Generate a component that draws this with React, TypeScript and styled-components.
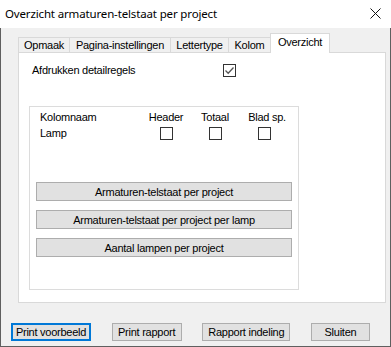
import React from 'react';
import styled, { createGlobalStyle } from 'styled-components';

const GlobalStyle = createGlobalStyle`
  html, body {
    margin: 0;
    padding: 0;
    background: #ffffff;
  }
  body {
    font-family: 'Liberation Sans', Arial, sans-serif;
    font-size: 11px;
    color: #000;
  }
`;

type TabDef = { label: string; width: number };

const tabs: TabDef[] = [
  { label: 'Opmaak', width: 52 },
  { label: 'Pagina-instellingen', width: 102 },
  { label: 'Lettertype', width: 59 },
  { label: 'Kolom', width: 43 },
  { label: 'Overzicht', width: 60 },
];

const reports = [
  'Armaturen-telstaat per project',
  'Armaturen-telstaat per project per lamp',
  'Aantal lampen per project',
];

const footerButtons = [
  { label: 'Print voorbeeld', width: 80, focused: true },
  { label: 'Print rapport', width: 70, focused: false },
  { label: 'Rapport indeling', width: 88, focused: false },
  { label: 'Sluiten', width: 59, focused: false },
];

const CheckBox: React.FC<{ checked?: boolean }> = ({ checked }) => (
  <Box>
    {checked && (
      <svg width="11" height="11" viewBox="0 0 11 11">
        <path d="M1.5 5.5 L4.2 8.2 L9.5 2.5" fill="none" stroke="#555" strokeWidth="1.3" />
      </svg>
    )}
  </Box>
);

const App: React.FC = () => {
  const activeTab = 'Overzicht';

  return (
    <>
      <GlobalStyle />
      <Window>
        <TitleBar>
          <Title>Overzicht armaturen-telstaat per project</Title>
          <CloseIcon width="11" height="11" viewBox="0 0 11 11">
            <path d="M0.5 0.5 L10.5 10.5 M10.5 0.5 L0.5 10.5" stroke="#111" strokeWidth="1" />
          </CloseIcon>
        </TitleBar>
        <Body>
          <TabStrip>
            {tabs.map((t) => (
              <Tab key={t.label} $width={t.width} $active={t.label === activeTab}>
                {t.label}
              </Tab>
            ))}
          </TabStrip>
          <Panel>
            <DetailRow>
              <span>Afdrukken detailregels</span>
              <CheckBox checked />
            </DetailRow>
            <Group>
              <ColumnGrid>
                <span>Kolomnaam</span>
                <ColHead>Header</ColHead>
                <ColHead>Totaal</ColHead>
                <ColHead>Blad sp.</ColHead>
                <span>Lamp</span>
                <ColCell>
                  <CheckBox />
                </ColCell>
                <ColCell>
                  <CheckBox />
                </ColCell>
                <ColCell $shift={-3}>
                  <CheckBox />
                </ColCell>
              </ColumnGrid>
              <ReportList>
                {reports.map((r) => (
                  <ReportButton key={r}>{r}</ReportButton>
                ))}
              </ReportList>
            </Group>
          </Panel>
          <Footer>
            {footerButtons.map((b) => (
              <FooterButton key={b.label} $width={b.width} $focused={b.focused}>
                {b.label}
              </FooterButton>
            ))}
          </Footer>
        </Body>
      </Window>
    </>
  );
};

export default App;

const Window = styled.div`
  width: 391px;
  height: 347px;
  display: flex;
  flex-direction: column;
  box-sizing: border-box;
`;

const TitleBar = styled.div`
  height: 28px;
  flex: none;
  display: flex;
  align-items: center;
  justify-content: space-between;
  background: #fff;
  padding: 0 10px 0 5px;
`;

const Title = styled.span`
  font-family: 'Noto Sans', 'Open Sans', sans-serif;
  font-size: 11.5px;
  letter-spacing: -0.15px;
  color: #000;
  margin-top: -1px;
`;

const CloseIcon = styled.svg`
  margin-top: -2px;
`;

const Body = styled.div`
  flex: 1;
  display: flex;
  flex-direction: column;
  background: #f0f0f0;
  border: 1px solid #5f5f5f;
  border-top: none;
  padding: 5px 5px 0 17px;
`;

const TabStrip = styled.div`
  display: flex;
  align-items: flex-end;
  height: 20px;
  margin-bottom: -1px;
  position: relative;
  z-index: 1;
`;

const Tab = styled.div<{ $width: number; $active: boolean }>`
  box-sizing: border-box;
  width: ${(p) => p.$width}px;
  height: ${(p) => (p.$active ? 20 : 15)}px;
  margin-bottom: ${(p) => (p.$active ? 0 : 1)}px;
  margin-left: -1px;
  &:first-child {
    margin-left: 0;
  }
  border: 1px solid #d9d9d9;
  border-bottom: none;
  background: ${(p) => (p.$active ? '#ffffff' : '#f0f0f0')};
  display: flex;
  align-items: ${(p) => (p.$active ? 'flex-start' : 'center')};
  padding-top: ${(p) => (p.$active ? 2 : 0)}px;
  justify-content: center;
  letter-spacing: -0.25px;
  white-space: nowrap;
`;

const Panel = styled.div`
  box-sizing: border-box;
  width: 368px;
  height: 251px;
  background: #fff;
  border: 1px solid #d9d9d9;
  padding: 10px 0 0 10px;
  display: flex;
  flex-direction: column;
  align-items: flex-start;
`;

const DetailRow = styled.div`
  display: grid;
  grid-template-columns: 191px 13px;
  align-items: center;
  height: 14px;
  margin-left: 3px;
  letter-spacing: -0.25px;
`;

const Box = styled.div`
  box-sizing: border-box;
  width: 13px;
  height: 13px;
  border: 1px solid #333;
  background: #fff;
  display: flex;
  align-items: center;
  justify-content: center;
`;

const Group = styled.div`
  box-sizing: border-box;
  width: 270px;
  height: 184px;
  margin-top: 29px;
  border: 1px solid #dcdcdc;
  padding: 3px 0 0 6px;
  display: flex;
  flex-direction: column;
`;

const ColumnGrid = styled.div`
  display: grid;
  grid-template-columns: 101px 50px 48px 56px;
  grid-template-rows: 14px 17px;
  align-items: center;
  padding-left: 4px;
  letter-spacing: -0.25px;
`;

const ColHead = styled.span`
  text-align: center;
  white-space: nowrap;
`;

const ColCell = styled.div<{ $shift?: number }>`
  display: flex;
  justify-content: center;
  align-self: end;
  padding-bottom: 1px;
  margin-left: ${(p) => (p.$shift ?? 0) * 2}px;
`;

const ReportList = styled.div`
  display: flex;
  flex-direction: column;
  gap: 9px;
  margin-top: 41px;
`;

const ReportButton = styled.div`
  box-sizing: border-box;
  width: 256px;
  height: 19px;
  background: #e1e1e1;
  border: 1px solid #adadad;
  display: flex;
  align-items: center;
  justify-content: center;
  letter-spacing: -0.25px;
  white-space: nowrap;
`;

const Footer = styled.div`
  display: flex;
  justify-content: space-between;
  margin-top: 20px;
  margin-left: -7px;
  padding-right: 15px;
`;

const FooterButton = styled.div<{ $width: number; $focused: boolean }>`
  box-sizing: border-box;
  width: ${(p) => p.$width}px;
  height: 18px;
  background: #e1e1e1;
  border: ${(p) => (p.$focused ? '2px solid #0078d7' : '1px solid #adadad')};
  display: flex;
  align-items: center;
  justify-content: center;
  letter-spacing: -0.25px;
  white-space: nowrap;
`;
